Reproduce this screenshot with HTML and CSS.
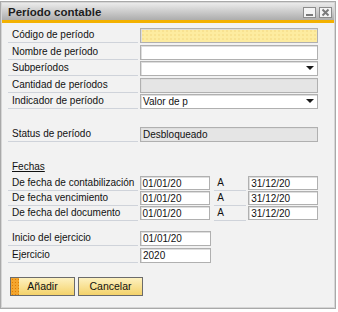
FILE: index.html
```html
<!DOCTYPE html>
<html lang="es">
<head>
    <meta charset="UTF-8">
    <title>Período contable</title>
    <link rel="stylesheet" href="styles.css">
</head>
<body>

    <div class="window">
        <!-- Title bar -->
        <div class="titlebar">
            <span class="title">Período contable</span>
            <div class="win-buttons">
                <svg class="wbtn" width="13" height="11" viewBox="0 0 13 11">
                    <rect x="0.5" y="0.5" width="12" height="10" fill="#f4f4f4" stroke="#8c8c8c"/>
                    <rect x="3" y="7" width="7" height="2" fill="#7a7a7a"/>
                </svg>
                <svg class="wbtn" width="13" height="11" viewBox="0 0 13 11">
                    <rect x="0.5" y="0.5" width="12" height="10" fill="#f4f4f4" stroke="#8c8c8c"/>
                    <path d="M3.5 2.5 L9.5 8.5 M9.5 2.5 L3.5 8.5" stroke="#7a7a7a" stroke-width="2"/>
                </svg>
            </div>
        </div>

        <div class="content">
            <!-- Main data -->
            <div class="main">
                <div class="row">
                    <label class="label">Código de período</label>
                    <div class="field mandatory"></div>
                </div>
                <div class="row">
                    <label class="label">Nombre de período</label>
                    <div class="field"></div>
                </div>
                <div class="row">
                    <label class="label">Subperíodos</label>
                    <div class="field select"></div>
                </div>
                <div class="row">
                    <label class="label">Cantidad de períodos</label>
                    <div class="field disabled"></div>
                </div>
                <div class="row">
                    <label class="label">Indicador de período</label>
                    <div class="field select">Valor de p</div>
                </div>
                <div class="row empty"></div>
                <div class="row">
                    <label class="label">Status de período</label>
                    <div class="field disabled">Desbloqueado</div>
                </div>
            </div>

            <!-- Dates -->
            <div class="dates">
                <div class="section-title">Fechas</div>
                <div class="row date-row">
                    <label class="label">De fecha de contabilización</label>
                    <div class="field date">01/01/20</div>
                    <span class="to">A</span>
                    <div class="field date date-to">31/12/20</div>
                </div>
                <div class="row date-row">
                    <label class="label">De fecha vencimiento</label>
                    <div class="field date">01/01/20</div>
                    <span class="to">A</span>
                    <div class="field date date-to">31/12/20</div>
                </div>
                <div class="row date-row">
                    <label class="label">De fecha del documento</label>
                    <div class="field date">01/01/20</div>
                    <span class="to">A</span>
                    <div class="field date date-to">31/12/20</div>
                </div>
            </div>

            <!-- Fiscal year -->
            <div class="fiscal">
                <div class="row fiscal-row">
                    <label class="label">Inicio del ejercicio</label>
                    <div class="field date">01/01/20</div>
                </div>
                <div class="row fiscal-row">
                    <label class="label">Ejercicio</label>
                    <div class="field date">2020</div>
                </div>
            </div>

            <div class="actions">
                <button class="btn primary"><span class="btn-mark"></span><span class="btn-text">Añadir</span></button>
                <button class="btn"><span class="btn-text">Cancelar</span></button>
            </div>
        </div>
    </div>

</body>
</html>
```

FILE: styles.css
```css
* {
    margin: 0;
    padding: 0;
    box-sizing: border-box;
}

body {
    background: #ffffff;
    font-family: "Liberation Sans", Arial, sans-serif;
    font-size: 10px;
    color: #111111;
}

/* Window frame */
.window {
    width: 336px;
    height: 308px;
    margin-top: 1px;
    border: 1px solid #a9a9a9;
    padding: 1px;
    background: #f2f2f2;
    box-shadow: inset 0 0 0 1px #d6d6d6;
}

.titlebar {
    height: 20px;
    display: flex;
    justify-content: space-between;
    align-items: center;
    padding: 0 2px 0 6px;
    background: linear-gradient(#ebebeb, #adadad);
    border-bottom: 3px solid #f3b100;
}

.title {
    font-size: 11.5px;
    font-weight: bold;
    color: #1e1e1e;
}

.win-buttons {
    display: flex;
    gap: 3px;
    margin-top: 2px;
}

.wbtn {
    display: block;
}

/* Form */
.content {
    padding: 5px 16px 0 6px;
}

.row {
    display: flex;
    height: 16.5px;
}

.label {
    width: 130px;
    height: 15px;
    padding-left: 4px;
    line-height: 14px;
    border-bottom: 1px solid #cfd3da;
    white-space: nowrap;
}

.field {
    position: relative;
    margin-left: 2px;
    width: 178px;
    height: 15px;
    padding-left: 2px;
    line-height: 13px;
    background: #ffffff;
    border: 1px solid #b0b0b0;
    box-shadow: inset 1px 1px 0 #dedede;
}

.field.mandatory {
    background-color: #fdeca0;
    background-image: radial-gradient(circle, #f1d57e 0.6px, transparent 0.8px);
    background-size: 4px 4px;
}

.field.disabled {
    background: #e5e5e5;
}

.field.select::after {
    content: "";
    position: absolute;
    right: 3px;
    top: 4px;
    border-left: 4px solid transparent;
    border-right: 4px solid transparent;
    border-top: 4px solid #1a1a1a;
}

/* Dates */
.dates {
    margin-top: 16px;
}

.section-title {
    height: 16px;
    padding-left: 4px;
    line-height: 14px;
    text-decoration: underline;
}

.date-row {
    height: 15px;
}

.field.date {
    width: 71px;
    height: 14px;
}

.to {
    margin-left: 4px;
    width: 32px;
    height: 15px;
    padding-left: 3px;
    line-height: 14px;
    border-bottom: 1px solid #cfd3da;
}

.field.date-to {
    width: 70px;
}

/* Fiscal year */
.fiscal {
    margin-top: 10px;
}

.fiscal-row {
    height: 17px;
}

.fiscal-row .field.date {
    height: 15px;
}

/* Buttons */
.actions {
    display: flex;
    gap: 3px;
    margin-top: 12px;
    padding-left: 2px;
}

.btn {
    display: flex;
    width: 65px;
    height: 19px;
    border: 1px solid #6b6b6b;
    background: linear-gradient(#fdf1c0, #f4d26a);
    font-family: "Liberation Sans", Arial, sans-serif;
    font-size: 10.5px;
    color: #111111;
    cursor: pointer;
}

.btn-mark {
    width: 8px;
    height: 100%;
    background-color: #f3a52e;
    background-image: radial-gradient(circle, #e07d00 0.6px, transparent 0.8px);
    background-size: 3px 3px;
}

.btn-text {
    flex: 1;
    line-height: 17px;
    text-align: center;
}

.primary .btn-text {
    padding-right: 8px;
}
```
